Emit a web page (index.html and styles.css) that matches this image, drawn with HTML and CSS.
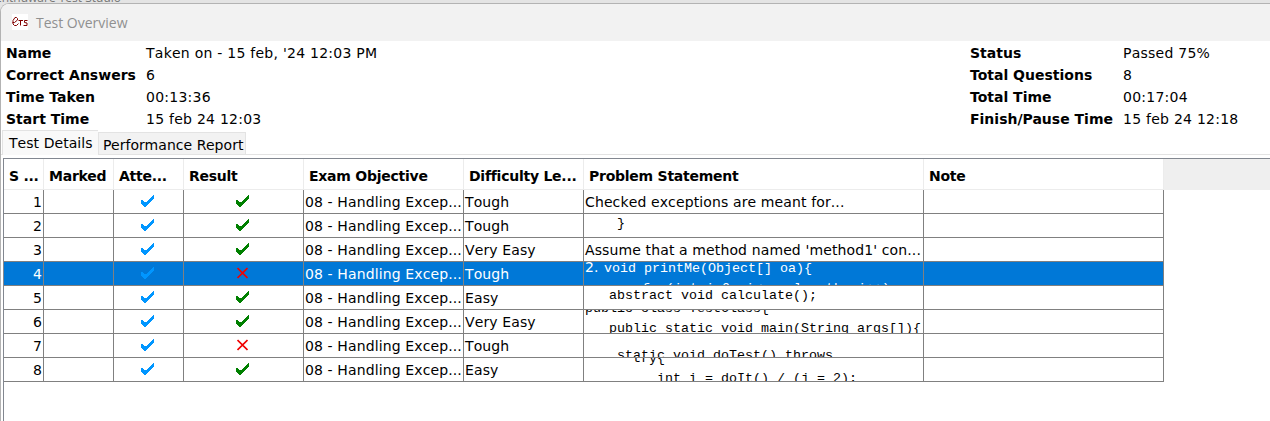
FILE: index.html
```html
<!DOCTYPE html>
<html lang="en">
<head>
<meta charset="utf-8">
<title>Test Overview</title>
<link rel="stylesheet" href="styles.css">
</head>
<body>
<svg class="defs" aria-hidden="true">
<symbol id="tick" viewBox="0 0 13 12"><path d="M0 5h1l1 1 1 1h2l6-6 1-1h1v3L5 11 4 12 2 11 0 9z" shape-rendering="crispEdges"/></symbol>
<symbol id="cross" viewBox="0 0 11 12"><path d="M.5 1l10 10M10.500 1l-10 10" fill="none" stroke="#f00000" stroke-width="1.700"/></symbol>
</svg>
<div class="behind"><span class="behind-title">Enthuware Test Studio</span></div>
<main class="window">
<header class="titlebar">
<svg class="logo" width="16" height="16" viewBox="0 0 16 16"><path fill="#fff" d="M0 0h16v16H0z"/><path d="M.5 8.500h2l3-2.500V4.500l-1-1h-1.500L1 6.500v3.500l1.500 1.500h2l2-2M6.500 6.500h4.500M8.500 6.500v5M15.500 6.500h-3v2l2.500.5v2.500h-3.500" fill="none" stroke="#800000" stroke-width="1"/></svg>
<h1>Test Overview</h1>
</header>
<section class="summary">
<dl class="left"><dt>Name</dt><dd>Taken on - 15 feb, '24 12:03 PM</dd><dt>Correct Answers</dt><dd>6</dd><dt>Time Taken</dt><dd>00:13:36</dd><dt>Start Time</dt><dd>15 feb 24 12:03</dd></dl>
<dl class="right"><dt>Status</dt><dd>Passed 75%</dd><dt>Total Questions</dt><dd>8</dd><dt>Total Time</dt><dd>00:17:04</dd><dt>Finish/Pause Time</dt><dd>15 feb 24 12:18</dd></dl>
</section>
<nav class="tabs"><div class="tab active">Test Details</div><div class="tab">Performance Report</div></nav>
<section class="panel">
<div class="row head"><div>S ...</div><div>Marked</div><div>Atte...</div><div>Result</div><div>Exam Objective</div><div>Difficulty Le...</div><div>Problem Statement</div><div>Note</div></div>
<div class="row"><div class="num">1</div><div></div><div class="icon"><svg class="blue"><use href="#tick"/></svg></div><div class="icon"><svg class="green"><use href="#tick"/></svg></div><div>08 - Handling Excep...</div><div>Tough</div><div>Checked exceptions are meant for...</div><div></div></div>
<div class="row"><div class="num">2</div><div></div><div class="icon"><svg class="blue"><use href="#tick"/></svg></div><div class="icon"><svg class="green"><use href="#tick"/></svg></div><div>08 - Handling Excep...</div><div>Tough</div><div class="code"><pre class="c2">    }</pre></div><div></div></div>
<div class="row"><div class="num">3</div><div></div><div class="icon"><svg class="blue"><use href="#tick"/></svg></div><div class="icon"><svg class="green"><use href="#tick"/></svg></div><div>08 - Handling Excep...</div><div>Very Easy</div><div>Assume that a method named 'method1' con...</div><div></div></div>
<div class="row selected"><div class="num">4</div><div></div><div class="icon"><svg class="blue"><use href="#tick"/></svg></div><div class="icon"><svg class="red"><use href="#cross"/></svg></div><div>08 - Handling Excep...</div><div>Tough</div><div class="code"><pre class="c4"><span class="marker">2.</span>void printMe(Object[] oa){
<span class="loop">for(int i=0; i&lt;=oa.length; i++)</span></pre></div><div></div></div>
<div class="row"><div class="num">5</div><div></div><div class="icon"><svg class="blue"><use href="#tick"/></svg></div><div class="icon"><svg class="green"><use href="#tick"/></svg></div><div>08 - Handling Excep...</div><div>Easy</div><div class="code"><pre class="c5">   abstract void calculate();</pre></div><div></div></div>
<div class="row"><div class="num">6</div><div></div><div class="icon"><svg class="blue"><use href="#tick"/></svg></div><div class="icon"><svg class="green"><use href="#tick"/></svg></div><div>08 - Handling Excep...</div><div>Very Easy</div><div class="code"><pre class="c6">public class TestClass{
   public static void main(String args[]){</pre></div><div></div></div>
<div class="row"><div class="num">7</div><div></div><div class="icon"><svg class="blue"><use href="#tick"/></svg></div><div class="icon"><svg class="red"><use href="#cross"/></svg></div><div>08 - Handling Excep...</div><div>Tough</div><div class="code"><pre class="c7">    static void doTest() throws</pre></div><div></div></div>
<div class="row"><div class="num">8</div><div></div><div class="icon"><svg class="blue"><use href="#tick"/></svg></div><div class="icon"><svg class="green"><use href="#tick"/></svg></div><div>08 - Handling Excep...</div><div>Easy</div><div class="code"><pre class="c8">      try{
         int i = doIt() / (j = 2);</pre></div><div></div></div>
</section>
</main>
</body>
</html>
```
FILE: styles.css
```css
* { box-sizing: border-box; }
body { margin: 0; height: 421px; overflow: hidden; display: flex; flex-direction: column; background: #e4e4e4; color: #000; font: 14px/22px "DejaVu Sans", Verdana, sans-serif; }
.defs { position: absolute; width: 0; height: 0; }
.behind { height: 3px; flex: none; overflow: hidden; display: flex; align-items: flex-end; }
.behind-title { font: 12px/12px "Open Sans", sans-serif; color: #777; flex: none; margin: 0 0 -1px -5px; }
.window { flex: 1; background: #fff; border: 1px solid #b3b3b3; border-width: 1px 0 0 1px; border-radius: 9px 0 0 0; overflow: hidden; display: flex; flex-direction: column; }
.titlebar { height: 37px; flex: none; display: flex; align-items: center; gap: 8px; padding-left: 11px; background: #f2f2f2; }
.logo { margin-top: -2px; }
h1 { margin: 1px 0 0; font: 14px/20px "Open Sans", sans-serif; color: #909090; }
.summary { height: 89px; flex: none; display: flex; justify-content: space-between; padding: 1px 32px 0 5px; }
dl { margin: 0; display: grid; grid-auto-rows: 22px; white-space: nowrap; }
.left { grid-template-columns: 140px 240px; }
.right { grid-template-columns: 153px 115px; }
dt { font-weight: bold; }
dd { margin: 0; letter-spacing: .25px; font-kerning: none; }
.tabs { height: 25px; flex: none; display: flex; align-items: flex-end; padding-left: 1px; border-bottom: 1px solid #e3e3e3; }
.tab { height: 22px; width: 148px; padding-left: 4px; background: #f2f2f2; border: 1px solid #e3e3e3; border-bottom: 0; white-space: nowrap; line-height: 25px; letter-spacing: .05px; }
.tab.active { height: 25px; width: 96px; padding-left: 6px; background: #f9f9f9; margin-bottom: -1px; border-right: 0; font-kerning: none; }
.panel { flex: 1; margin: 3px 0 0 2px; border: 1px solid #828790; border-width: 1px 0 0 1px; }
.row { display: grid; grid-template-columns: 40px 70px 70px 120px 160px 120px 340px 240px; height: 24px; width: 1160px; }
.row > div { border: 1px solid #808080; border-width: 0 1px 1px 0; padding-left: 1px; line-height: 25px; white-space: nowrap; overflow: hidden; letter-spacing: .12px; font-kerning: none; }
.row.head { width: auto; height: 31px; background: #efefef; }
.row.head > div { background: #fff; border-color: #ececec; padding-left: 5px; font-weight: bold; line-height: 35px; letter-spacing: -.25px; font-kerning: auto; }
.row > .num { text-align: right; padding-right: 1px; }
.row > .icon { display: flex; align-items: center; justify-content: center; padding: 0 2px 1px 0; }
.icon svg { width: 13px; height: 12px; }
.icon .red { width: 11px; }
.blue { fill: #0096ff; }
.green { fill: #008000; }
.selected { background: #0078d7; color: #fff; }
pre { margin: 0; font: 13.333px/20px "Liberation Mono", monospace; letter-spacing: 0; }
.c2, .c5 { margin-top: 0; }
.c4 { margin-top: -3px; }
.c6 { margin-top: -11px; }
.c7 { margin-top: 12px; }
.c8 { margin-top: -9px; }
.marker { display: inline-block; width: 19px; font: 14px/14px "DejaVu Sans", sans-serif; }
.loop { padding-left: 57px; }
```
